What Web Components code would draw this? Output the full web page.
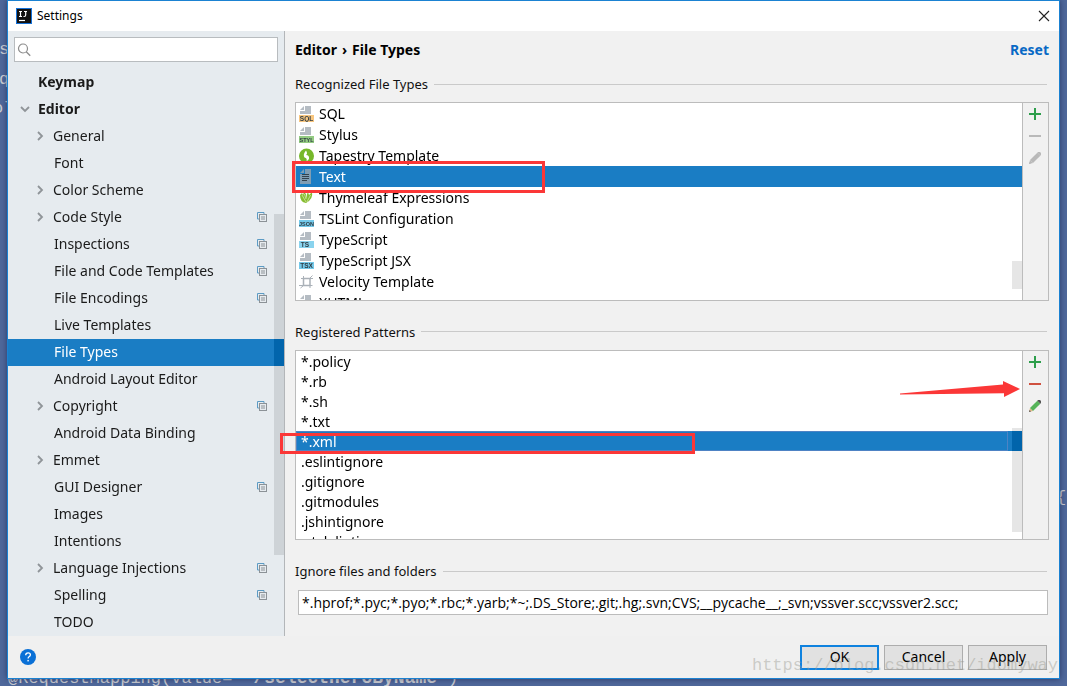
<!DOCTYPE html>
<html lang="en">
<head>
<meta charset="utf-8">
<title>Settings</title>
<style>
  html, body { height: 100%; }
  body {
    margin: 0;
    overflow: hidden;
    font-family: "Noto Sans", "Open Sans", sans-serif;
    font-size: 14px;
    line-height: 20px;
    color: #111;
    --accent: #1a7dc4;
    --line: #bcbcbc;
    --panel: #f1f1f1;
  }
</style>
</head>
<body>

<desktop-scene>
  <code-fragment slot="code" style="left:-1px;top:39px">s</code-fragment>
  <code-fragment slot="code" style="left:-1px;top:69px">q</code-fragment>
  <code-fragment slot="code" style="left:-7px;top:98px">ol</code-fragment>
  <code-fragment slot="code" style="left:1056px;top:487px">{</code-fragment>
  <code-fragment slot="code" style="left:8px;bottom:-4px">@RequestMapping(value= <b>"/selectHeroByName"</b>)</code-fragment>

  <settings-window heading="Settings">
    <settings-tree slot="side">
      <tree-item level="0" strong>Keymap</tree-item>
      <tree-item level="0" strong state="open">Editor</tree-item>
      <tree-item state="closed">General</tree-item>
      <tree-item>Font</tree-item>
      <tree-item state="closed">Color Scheme</tree-item>
      <tree-item state="closed" scoped>Code Style</tree-item>
      <tree-item scoped>Inspections</tree-item>
      <tree-item scoped>File and Code Templates</tree-item>
      <tree-item scoped>File Encodings</tree-item>
      <tree-item>Live Templates</tree-item>
      <tree-item selected>File Types</tree-item>
      <tree-item>Android Layout Editor</tree-item>
      <tree-item state="closed" scoped>Copyright</tree-item>
      <tree-item>Android Data Binding</tree-item>
      <tree-item state="closed">Emmet</tree-item>
      <tree-item scoped>GUI Designer</tree-item>
      <tree-item>Images</tree-item>
      <tree-item>Intentions</tree-item>
      <tree-item state="closed" scoped>Language Injections</tree-item>
      <tree-item scoped>Spelling</tree-item>
      <tree-item>TODO</tree-item>
    </settings-tree>

    <page-header slot="main" parent="Editor" page="File Types"></page-header>

    <group-title slot="main" class="first">Recognized File Types</group-title>
    <list-panel slot="main" class="types" label="Recognized File Types" tools="idle">
      <type-row icon="sql">SQL</type-row>
      <type-row icon="styl">Stylus</type-row>
      <type-row icon="tapestry">Tapestry Template</type-row>
      <type-row icon="text" selected>Text</type-row>
      <type-row icon="thymeleaf">Thymeleaf Expressions</type-row>
      <type-row icon="json">TSLint Configuration</type-row>
      <type-row icon="ts">TypeScript</type-row>
      <type-row icon="tsx">TypeScript JSX</type-row>
      <type-row icon="velocity">Velocity Template</type-row>
      <type-row icon="xhtml">XHTML</type-row>
      <mark-box slot="mark" style="left:-4px;top:58px;width:253px;height:32px"></mark-box>
    </list-panel>

    <group-title slot="main">Registered Patterns</group-title>
    <list-panel slot="main" class="patterns" label="Registered Patterns" tools="active">
      <pattern-row>*.policy</pattern-row>
      <pattern-row>*.rb</pattern-row>
      <pattern-row>*.sh</pattern-row>
      <pattern-row>*.txt</pattern-row>
      <pattern-row selected>*.xml</pattern-row>
      <pattern-row>.eslintignore</pattern-row>
      <pattern-row>.gitignore</pattern-row>
      <pattern-row>.gitmodules</pattern-row>
      <pattern-row>.jshintignore</pattern-row>
      <pattern-row>.stylelintignore</pattern-row>
      <mark-box slot="mark" style="left:-16px;top:82px;width:415px;height:21px"></mark-box>
      <mark-arrow slot="mark" style="right:28px;top:29px"></mark-arrow>
    </list-panel>

    <ignore-field slot="main" value="*.hprof;*.pyc;*.pyo;*.rbc;*.yarb;*~;.DS_Store;.git;.hg;.svn;CVS;__pycache__;_svn;vssver.scc;vssver2.scc;"></ignore-field>

    <dialog-button slot="actions" primary>OK</dialog-button>
    <dialog-button slot="actions">Cancel</dialog-button>
    <dialog-button slot="actions">Apply</dialog-button>
  </settings-window>

  <span slot="stamp">https://blog.csdn.net/idomyway</span>
</desktop-scene>

<script>
const define = (name, render, after) => customElements.define(name, class extends HTMLElement {
  connectedCallback() {
    if (this.shadowRoot) return;
    this.attachShadow({ mode: 'open' }).innerHTML = render(this);
    if (after) after(this);
  }
});

define('desktop-scene', () => `
  <style>
    :host { display: flex; position: relative; height: 100vh; box-sizing: border-box; padding: 0 7px 7px;
            background: #4f689b; overflow: hidden; }
    ::slotted(settings-window) { flex: 1; position: relative; box-shadow: 0 0 6px rgba(0,0,40,.45); }
    .stamp { position: absolute; right: 9px; bottom: 8px; pointer-events: none; white-space: nowrap;
             font: 17px/24px "Liberation Mono", monospace; color: rgba(150,150,140,.42); }
  </style>
  <slot name="code"></slot>
  <slot></slot>
  <div class="stamp"><slot name="stamp"></slot></div>`);

define('code-fragment', () => `
  <style>
    :host { display: block; position: absolute; white-space: nowrap; color: #c9ccd2;
            font: 17px/22px "Liberation Mono", monospace; }
    ::slotted(b) { font-size: 18px; }
  </style><slot></slot>`);

define('settings-window', el => `
  <style>
    :host { display: flex; flex-direction: column; box-sizing: border-box; border: 1px solid #1b82d2;
            background: #f0f0f0; min-width: 0; }
    .bar { display: flex; align-items: center; height: 30px; background: #fff; padding: 0 8px; gap: 5px; flex: none; }
    h1 { flex: 1; margin: 0; font-size: 12px; font-weight: 400; color: #000; }
    .bar svg, .help svg { display: block; }
    button { border: 0; padding: 0; background: none; }
    .body { flex: 1; display: flex; min-height: 0; }
    aside { flex: none; width: 276px; display: flex; border-right: 1px solid #b3b6b9; background: #e6ebef; min-height: 0; }
    ::slotted(settings-tree) { flex: 1; min-width: 0; }
    main { flex: 1; min-width: 0; display: flex; flex-direction: column; box-sizing: border-box;
           padding: 0 10px 21px; background: var(--panel); }
    ::slotted(.types) { flex: 199 1 0; min-height: 0; }
    ::slotted(.patterns) { flex: 190 1 0; min-height: 0; }
    footer { flex: none; display: flex; align-items: center; gap: 5px; height: 42px; padding: 0 12px 0 11px; }
    .help { margin-right: auto; }
  </style>
  <div class="bar">
    <svg width="16" height="16" viewBox="0 0 16 16">
      <rect width="16" height="16" fill="#1571d8"/><rect x="1" y="1" width="14" height="14" fill="#111"/>
      <path d="M3 3.500h3M4.500 3.500v5M3 8.500h3M8 3.500h3M9.700 3.500v3.500q0 1.500-1.500 1.500H7.500" stroke="#fff" stroke-width="1.200" fill="none"/>
      <path d="M3 12.500h6" stroke="#fff" stroke-width="1.200"/>
    </svg>
    <h1>${el.getAttribute('heading')}</h1>
    <button aria-label="Close"><svg width="13" height="13" viewBox="0 0 13 13"><path d="M1 1l10 10M11 1l-10 10" stroke="#222" stroke-width="1.100"/></svg></button>
  </div>
  <div class="body">
    <aside><slot name="side"></slot></aside>
    <main><slot name="main"></slot></main>
  </div>
  <footer>
    <button class="help" aria-label="Help"><svg width="18" height="18" viewBox="0 0 18 18">
      <circle cx="9" cy="9" r="8" fill="#0a70d6"/>
      <path d="M6.700 7.200Q6.700 4.900 9.100 4.900Q11.400 4.900 11.400 6.800Q11.400 8 10 8.800Q9.100 9.400 9.100 10.600" fill="none" stroke="#fff" stroke-width="1.300"/>
      <rect x="8.400" y="11.900" width="1.400" height="1.500" fill="#fff"/></svg></button>
    <slot name="actions"></slot>
  </footer>`);

define('settings-tree', () => `
  <style>
    :host { display: flex; flex-direction: column; position: relative; isolation: isolate; background: #e6ebef; }
    .search { display: flex; align-items: center; margin: 6px 6px 7px; height: 23px; border: 1px solid #b8bcbf; background: #fff; }
    .search svg { flex: none; margin-left: 2px; }
    input { flex: 1; min-width: 0; border: 0; outline: 0; background: none; font: inherit; padding: 0 4px; }
    .tree { flex: 1; min-height: 0; overflow: hidden; }
    .thumb { position: absolute; right: 0; top: 183px; bottom: 81px; width: 10px; background: #181818; mix-blend-mode: difference; }
  </style>
  <label class="search">
    <svg width="14" height="14" viewBox="0 0 14 14" fill="none" stroke="#8c8c8c"><circle cx="6" cy="5.500" r="4.500" stroke-width="1.200"/><path d="M9.200 8.800l4 4" stroke-width="1.300"/></svg>
    <input type="text" aria-label="Search settings">
  </label>
  <div class="tree" role="tree"><slot></slot></div>
  <div class="thumb"></div>`);

define('tree-item', el => {
  const state = el.getAttribute('state');
  const arrow = state === 'open' ? 'M2 4l4 4 4-4' : state === 'closed' ? 'M4 2l4 4-4 4' : '';
  return `
  <style>
    :host { display: flex; align-items: center; box-sizing: border-box; height: 27px; padding: 0 0 2px 27px; color: #1b1b1b; }
    :host([state]) { padding-left: 26px; }
    :host([level="0"]) { padding-left: 11px; }
    :host([strong]) { font-weight: 700; }
    :host([selected]) { background: var(--accent); color: #fff; }
    .arrow { flex: none; margin-right: 7px; }
    .name { flex: 1; white-space: nowrap; }
    .scope { flex: none; margin-right: 17px; }
  </style>
  <svg class="arrow" width="12" height="12" viewBox="0 0 12 12"><path d="${arrow}" fill="none" stroke="#8f9498" stroke-width="1.800"/></svg>
  <span class="name"><slot></slot></span>
  ${el.hasAttribute('scoped') ? `<svg class="scope" width="10" height="10" viewBox="0 0 10 10" fill="none">
    <path d="M2.500 7H.5V.5H7V2" stroke="#5c9bc4"/><rect x="2.500" y="2.500" width="7" height="7" stroke="#8c9297"/>
    <path d="M4 5h4M4 7h4" stroke="#8c9297"/></svg>` : ''}`;
}, el => {
  el.setAttribute('role', 'treeitem');
  el.setAttribute('aria-selected', el.hasAttribute('selected'));
});

define('page-header', el => `
  <style>
    :host { display: flex; align-items: center; justify-content: space-between; height: 38px; flex: none; font-weight: 700; color: #000; }
    h2 { margin: 0; font-size: 14px; display: flex; gap: 5px; }
    a { color: #0869c5; text-decoration: none; }
  </style>
  <h2><span>${el.getAttribute('parent')}</span><span>›</span><span>${el.getAttribute('page')}</span></h2>
  <a href="#reset">Reset</a>`);

define('group-title', () => `
  <style>
    :host { display: flex; align-items: center; gap: 6px; height: 20px; flex: none; margin: 21px 2px 8px 0; font-size: 13px; color: #111; }
    :host(.first) { margin-top: 5px; }
    :host::after { content: ""; flex: 1; height: 1px; background: #cacaca; }
  </style><slot></slot>`);

const toolColours = {
  idle: { minus: '#b9b9b9', pencil: ['#b9b9b9', '#b9b9b9', '#b9b9b9'] },
  active: { minus: '#cf5140', pencil: ['#56b45a', '#e3b98a', '#555'] }
};

define('list-panel', el => {
  const c = toolColours[el.getAttribute('tools')];
  return `
  <style>
    :host { display: flex; position: relative; border: 1px solid var(--line); }
    .view { flex: 1; min-width: 0; position: relative; isolation: isolate; overflow: hidden; background: #fff; }
    .thumb { position: absolute; right: 0; width: 10px; background: #191919; mix-blend-mode: difference; }
    :host(.types) .thumb { top: 158px; height: 28px; }
    :host(.patterns) .thumb { top: 77px; height: 104px; }
    .tools { flex: none; width: 25px; border-left: 1px solid var(--line); display: flex; flex-direction: column;
             align-items: flex-start; background: var(--panel); }
    button { border: 0; padding: 0; background: none; width: 24px; height: 22px; display: grid; place-items: center; }
  </style>
  <div class="view" role="listbox" aria-label="${el.getAttribute('label')}"><slot></slot><div class="thumb"></div></div>
  <div class="tools">
    <button aria-label="Add"><svg width="12" height="12" viewBox="0 0 12 12"><path d="M0 6h12M6 0v12" stroke="#2d9e4b" stroke-width="2"/></svg></button>
    <button aria-label="Remove"><svg width="12" height="12" viewBox="0 0 12 12"><path d="M0 6h12" stroke="${c.minus}" stroke-width="2"/></svg></button>
    <button aria-label="Edit"><svg width="12" height="12" viewBox="0 0 12 12">
      <path d="M0 12l1-4 3 3z" fill="${c.pencil[1]}"/><path d="M0 12l.5-2 1.500 1.500z" fill="${c.pencil[2]}"/>
      <path d="M1 8L8.300.7l3 3L4 11z" fill="${c.pencil[0]}"/><path d="M8.300.7L9 0h2l1 1v2l-.7.7z" fill="${c.pencil[2]}"/></svg></button>
  </div>
  <slot name="mark"></slot>`;
});

const badge = (text, fill) => `
  <path d="M6 0h6v8H1V5h5z" fill="#b5bcc3"/><path d="M5 0v4H1z" fill="#b5bcc3"/>
  <rect y="9" width="15" height="7" fill="${fill}"/>
  <text x="${text.length > 2 ? 7.5 : 6}" y="15" text-anchor="middle" font-family="Liberation Sans, sans-serif" font-weight="700" font-size="${text.length > 3 ? 5.5 : 6.5}" fill="#2f3c44">${text}</text>`;

const typeIcons = {
  sql: badge('SQL', '#f8c67f'),
  styl: badge('STYL', '#93cb82'),
  json: badge('JSON', '#74c9ea'),
  ts: badge('TS', '#8ad3ee'),
  tsx: badge('TSX', '#74c9ea'),
  xhtml: badge('HTML', '#f8c67f'),
  tapestry: `<circle cx="7.500" cy="8" r="7.500" fill="#76b82a"/><path d="M7 2.500Q9 5.500 7 7Q10.500 7 10 11L7.500 13.500Q8.500 10 5.500 9.500Q3.500 6.500 7 2.500z" fill="#fff"/>`,
  text: `<path d="M6 0h6v15H1V5h5z" fill="#7f9db3"/><path d="M5 0v4H1z" fill="#7f9db3"/><path d="M3 5.500h7M3 7.500h7M3 9.500h7M3 11.500h5" stroke="#33424d"/>`,
  thymeleaf: `<path d="M1 5L3 3l1 2 1-3 2 2v5l1-5 1-2 1 3 3-3q1.500 7-6 11Q1 12 1 5z" fill="#86bc30"/><path d="M3 5l4 7M11.500 5L8 12M5.500 4l1.500 5" stroke="#dcebb8" stroke-width=".7"/>`,
  velocity: `<g fill="none" stroke="#aab1b8"><path d="M4.500 4.500h6.500v7H4.500z" stroke-width="1.500"/><path d="M2 4.500h2.500V2M11 11.500h2.500M11 11.500V14M0 11.500h4M11 4L13.500 1.500M11 4.500h3M4 12l-2.500 2"/></g>`
};

define('type-row', el => `
  <style>
    :host { display: flex; align-items: center; gap: 4px; height: 21px; padding-left: 3px; color: #000; white-space: nowrap; }
    :host([selected]) { background: var(--accent); color: #fff; }
    svg { flex: none; }
  </style>
  <svg width="16" height="16" viewBox="0 0 16 16">${typeIcons[el.getAttribute('icon')]}</svg><slot></slot>`,
  el => el.setAttribute('role', 'option'));

define('pattern-row', () => `
  <style>
    :host { display: block; position: relative; height: 20px; line-height: 21px; padding-left: 5px; color: #000; white-space: nowrap; }
    :host([selected]) { background: var(--accent); color: #fff; }
    :host([selected])::after { content: ""; position: absolute; inset: 0 14px 0 0; border: 1px solid #4e83c4; }
  </style><slot></slot>`,
  el => el.setAttribute('role', 'option'));

define('mark-box', () => `
  <style>:host { display: block; position: absolute; box-sizing: border-box; border: 3px solid #fb3737; pointer-events: none; }</style>`);

define('mark-arrow', () => `
  <style>:host { display: block; position: absolute; pointer-events: none; } svg { display: block; }</style>
  <svg width="120" height="18" viewBox="0 0 120 18"><path d="M0 13.500L103 4.500V1L120 9 104 17V13.200L0 14.500z" fill="#fb3737"/></svg>`);

define('ignore-field', el => `
  <style>
    :host { display: block; flex: none; }
    label { display: flex; align-items: center; gap: 6px; height: 20px; margin: 21px 2px 9px 0; font-size: 13px; }
    label::after { content: ""; flex: 1; height: 1px; background: #cacaca; }
    .box { display: flex; margin: 0 1px 0 3px; }
    input { flex: 1; min-width: 0; box-sizing: border-box; height: 25px; border: 1px solid var(--line); border-radius: 0;
            background: #fff; padding: 0 3px; font: 14px "Open Sans", sans-serif; color: #000; outline: 0; }
  </style>
  <label for="ignored">Ignore files and folders</label>
  <div class="box"><input id="ignored" type="text" value="${el.getAttribute('value')}"></div>`);

define('dialog-button', () => `
  <style>
    :host { display: block; }
    button { box-sizing: border-box; width: 79px; height: 25px; border: 1px solid #adadad; border-radius: 0; padding: 0;
             background: #e1e1e1; font: inherit; color: #000; }
    :host([primary]) button { border: 2px solid #0f82df; }
  </style>
  <button type="button"><slot></slot></button>`);
</script>
</body>
</html>
